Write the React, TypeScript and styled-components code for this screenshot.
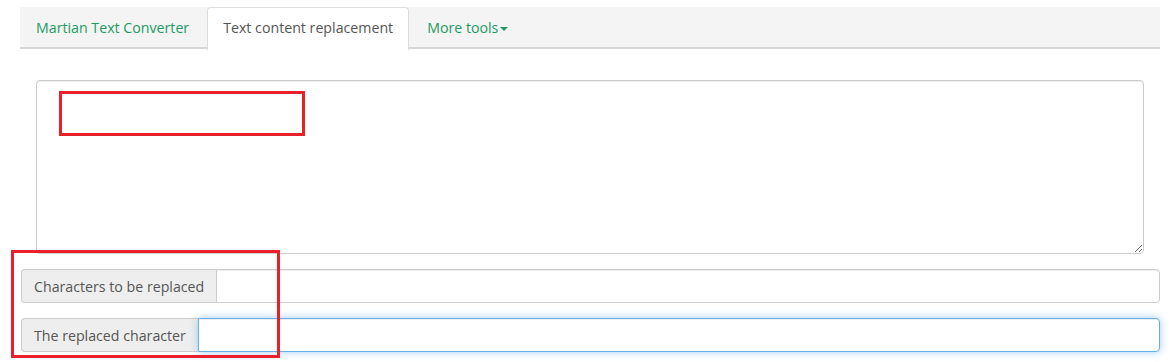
import React from "react";
import styled, { createGlobalStyle } from "styled-components";

const GlobalStyle = createGlobalStyle`
  body {
    margin: 0;
    background: #fff;
    font-family: "Segoe UI", "Open Sans", "Noto Sans", sans-serif;
    font-size: 14.2px;
    color: #555;
  }
`;

const Page = styled.div`
  position: relative;
  width: 1140px;
  padding: 7px 14px 0 20px;
`;

/* Tabs */
const TabBar = styled.ul`
  display: flex;
  margin: 0;
  padding: 0;
  list-style: none;
  height: 40px;
  background: #f4f4f4;
  border-bottom: 2px solid #d6d6d6;
`;

const Tab = styled.li<{ $active?: boolean }>`
  display: flex;
  align-items: center;
  padding: ${(p) => (p.$active ? "0 15px 3px" : "0 17px 0 15px")};
  box-sizing: border-box;
  font-size: 14.2px;
  color: ${(p) => (p.$active ? "#555" : "#1d9b63")};
  background: ${(p) => (p.$active ? "#fff" : "transparent")};
  border: 1px solid ${(p) => (p.$active ? "#ddd" : "transparent")};
  border-bottom: none;
  border-radius: 4px 4px 0 0;
  margin-right: ${(p) => (p.$active ? "2px" : "0")};
  margin-bottom: ${(p) => (p.$active ? "-2px" : "0")};
  height: ${(p) => (p.$active ? "43px" : "40px")};
`;

const Caret = styled.span`
  display: inline-block;
  margin-left: 2px;
  margin-top: 2px;
  border-top: 4px solid #1d9b63;
  border-left: 4px solid transparent;
  border-right: 4px solid transparent;
`;

/* Content */
const Body = styled.div`
  padding-top: 31px;
`;

const TextArea = styled.textarea`
  display: block;
  box-sizing: border-box;
  width: 1108px;
  height: 174px;
  margin: 0 0 15px 16px;
  padding: 6px 12px;
  border: 1px solid #ccc;
  border-radius: 4px;
  box-shadow: inset 0 1px 1px rgba(0, 0, 0, 0.075);
  font-family: inherit;
  font-size: 14px;
  color: #555;
  outline: none;
`;

const InputGroup = styled.div`
  display: flex;
  height: 34px;
  width: 1139px;
  margin-left: 1px;
  margin-bottom: 15px;
`;

const Addon = styled.span`
  display: flex;
  align-items: center;
  padding: 0 12px;
  background: #eee;
  border: 1px solid #ccc;
  border-right: none;
  border-radius: 4px 0 0 4px;
  color: #555;
  font-size: 14.2px;
  white-space: nowrap;
`;

const Field = styled.input<{ $focused?: boolean }>`
  flex: 1;
  box-sizing: border-box;
  height: 34px;
  padding: 6px 12px;
  border: 1px solid ${(p) => (p.$focused ? "#66afe9" : "#ccc")};
  border-radius: 0 4px 4px 0;
  box-shadow: ${(p) =>
    p.$focused
      ? "inset 0 1px 1px rgba(0,0,0,.075), 0 0 8px rgba(102,175,233,.6)"
      : "inset 0 1px 1px rgba(0,0,0,.075)"};
  font-family: inherit;
  font-size: 14px;
  outline: none;
`;

/* Annotation boxes drawn over the screenshot */
const Mark = styled.div`
  position: absolute;
  border: 3px solid #e8202a;
  box-sizing: border-box;
  pointer-events: none;
`;

export default function App() {
  return (
    <>
      <GlobalStyle />
      <Page>
        <TabBar>
          <Tab>Martian Text Converter</Tab>
          <Tab $active>Text content replacement</Tab>
          <Tab>
            More tools
            <Caret />
          </Tab>
        </TabBar>
        <Body>
          <TextArea />
          <InputGroup>
            <Addon>Characters to be replaced</Addon>
            <Field />
          </InputGroup>
          <InputGroup>
            <Addon>The replaced character</Addon>
            <Field $focused />
          </InputGroup>
        </Body>
        <Mark style={{ left: 59, top: 91, width: 246, height: 45 }} />
        <Mark style={{ left: 11, top: 250, width: 269, height: 108 }} />
      </Page>
    </>
  );
}
